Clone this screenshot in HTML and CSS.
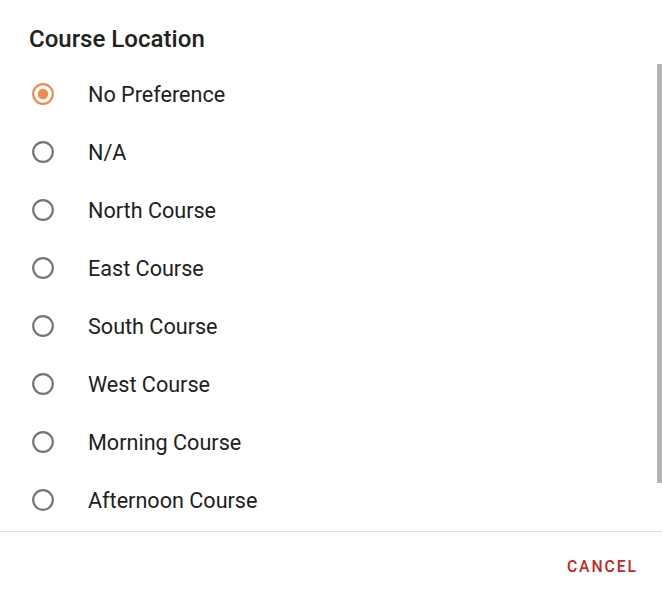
FILE: index.html
```html
<!DOCTYPE html>
<html>
<head>
<meta charset="utf-8">
<link rel="stylesheet" href="styles.css">
</head>
<body>
<div class="dialog">
  <div class="header"><h2 class="title">Course Location</h2></div>
  <div class="scroll">
    <div class="list">
      <label class="row"><span class="radio checked"><svg viewBox="0 0 24 24" width="24" height="24"><circle cx="12" cy="12" r="9.8" fill="none" stroke="currentColor" stroke-width="2.2"/><circle cx="12" cy="12" r="5.2" fill="currentColor"/></svg></span><span class="label">No Preference</span></label>
      <label class="row"><span class="radio"><svg viewBox="0 0 24 24" width="24" height="24"><circle cx="12" cy="12" r="9.8" fill="none" stroke="currentColor" stroke-width="2.2"/></svg></span><span class="label">N/A</span></label>
      <label class="row"><span class="radio"><svg viewBox="0 0 24 24" width="24" height="24"><circle cx="12" cy="12" r="9.8" fill="none" stroke="currentColor" stroke-width="2.2"/></svg></span><span class="label">North Course</span></label>
      <label class="row"><span class="radio"><svg viewBox="0 0 24 24" width="24" height="24"><circle cx="12" cy="12" r="9.8" fill="none" stroke="currentColor" stroke-width="2.2"/></svg></span><span class="label">East Course</span></label>
      <label class="row"><span class="radio"><svg viewBox="0 0 24 24" width="24" height="24"><circle cx="12" cy="12" r="9.8" fill="none" stroke="currentColor" stroke-width="2.2"/></svg></span><span class="label">South Course</span></label>
      <label class="row"><span class="radio"><svg viewBox="0 0 24 24" width="24" height="24"><circle cx="12" cy="12" r="9.8" fill="none" stroke="currentColor" stroke-width="2.2"/></svg></span><span class="label">West Course</span></label>
      <label class="row"><span class="radio"><svg viewBox="0 0 24 24" width="24" height="24"><circle cx="12" cy="12" r="9.8" fill="none" stroke="currentColor" stroke-width="2.2"/></svg></span><span class="label">Morning Course</span></label>
      <label class="row"><span class="radio"><svg viewBox="0 0 24 24" width="24" height="24"><circle cx="12" cy="12" r="9.8" fill="none" stroke="currentColor" stroke-width="2.2"/></svg></span><span class="label">Afternoon Course</span></label>
    </div>
    <div class="thumb"></div>
  </div>
  <div class="footer"><button class="btn">CANCEL</button></div>
</div>
</body>
</html>
```
FILE: styles.css
```css
html, body {
  margin: 0;
  padding: 0;
  background: #ffffff;
}
body {
  font-family: Roboto, "Liberation Sans", sans-serif;
  color: rgba(0, 0, 0, 0.87);
}
.dialog {
  width: 662px;
  height: 600px;
  display: flex;
  flex-direction: column;
  background: #fff;
}
.header {
  height: 64px;
  box-sizing: border-box;
  padding: 24px 0 0 29px;
}
.title {
  margin: 0;
  font-family: "Roboto Medium", Roboto, "Liberation Sans", sans-serif;
  font-size: 24px;
  font-weight: 500;
  line-height: 30px;
  color: #222222;
}
.scroll {
  position: relative;
  height: 467px;
  overflow: hidden;
  border-bottom: 1px solid #e0e0e0;
}
.thumb {
  position: absolute;
  top: 0;
  right: 0;
  width: 5px;
  height: 419px;
  background: #b4b4b4;
}
.list {
  padding: 1px 0 0 0;
}
.row {
  display: flex;
  align-items: center;
  height: 58px;
  padding-left: 31px;
}
.radio {
  width: 24px;
  height: 24px;
  color: #757575;
  display: flex;
}
.radio.checked {
  color: #f4894c;
}
.label {
  margin-left: 33px;
  font-size: 21.6px;
  font-weight: 400;
  color: #212121;
}
.footer {
  flex: 1;
  display: flex;
  align-items: center;
  justify-content: flex-end;
  padding-right: 16px;
}
.btn {
  border: none;
  background: transparent;
  font-family: "Roboto Medium", Roboto, "Liberation Sans", sans-serif;
  font-weight: 500;
  font-size: 15.75px;
  letter-spacing: 1.9px;
  color: #c62828;
  padding: 8px 8px 8px 8px;
}
```
